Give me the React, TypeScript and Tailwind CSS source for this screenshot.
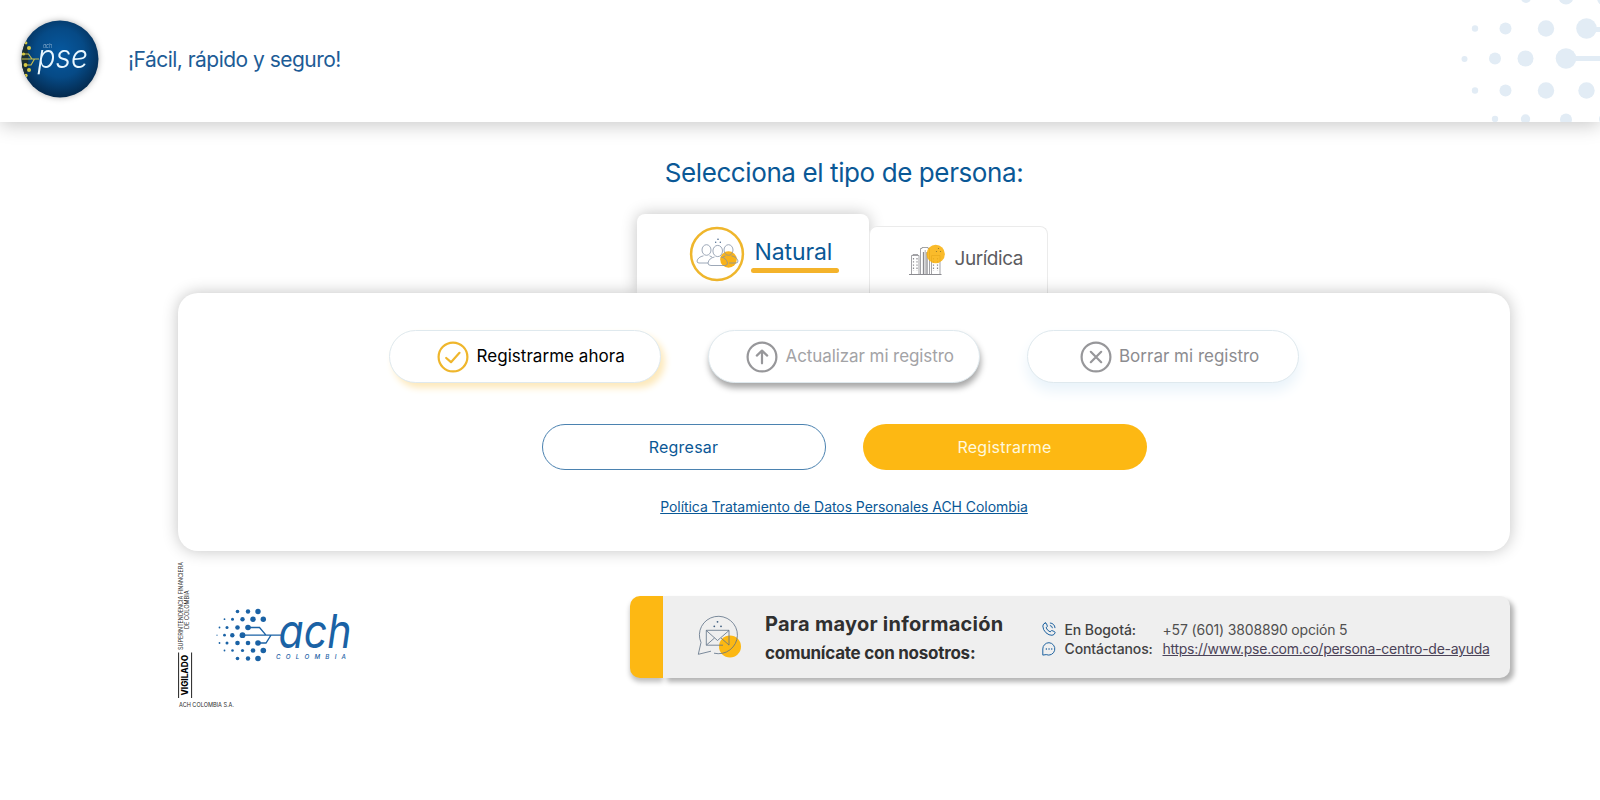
import React from 'react';

const actions = [
  {
    label: 'Registrarme ahora',
    icon: 'check',
    pill: 'pl-[47px] shadow-[4px_5px_7px_#fde9bb]',
    iconColor: 'text-[#efb62c]',
    text: 'text-black tracking-[0.04px]',
  },
  {
    label: 'Actualizar mi registro',
    icon: 'up',
    pill: 'pl-[37px] shadow-[1px_5px_6px_#a8a8a8]',
    iconColor: 'text-[#97979a]',
    text: 'text-[#a3a3a6] tracking-[-0.08px]',
  },
  {
    label: 'Borrar mi registro',
    icon: 'close',
    pill: 'pl-[51.5px] shadow-[0_8px_14px_#e9f3fa]',
    iconColor: 'text-[#97979a]',
    text: 'text-[#8c8c90] tracking-[0px]',
  },
];

const headerDots = [
  [86, -2, 5], [126, -3, 7.5], [165, -2, 8],
  [35, 28.5, 3.2], [65.5, 28.5, 6], [106, 28.5, 8.2], [146.5, 28.5, 10.3],
  [24.5, 59, 3], [55, 58.5, 6], [85.5, 58.5, 8], [126, 58.5, 10.3],
  [35, 90.5, 3.2], [65.5, 90.5, 6], [106, 90.5, 8.2], [146.5, 90.5, 8.2],
  [55, 119, 3.2], [85.5, 119, 4.7], [126, 119.5, 6], [165, 119, 6],
];

const achDots = [
  [77.5, 71.5, 1.8], [88, 71.5, 2.2], [98, 71.5, 2.7],
  [64.5, 79.2, 0.9], [72.5, 79.2, 1.5], [82.5, 79.2, 2.2], [93, 79.2, 2.7], [103.3, 79.2, 2.7],
  [59.5, 87.5, 0.9], [67, 87.5, 1.5], [77.5, 87.5, 2.3], [88, 87.5, 2.8],
  [57, 95.2, 0.6], [64.5, 95.2, 1.4], [72.3, 95.2, 2.2], [82.5, 95.2, 2.9],
  [59.5, 103, 0.9], [67, 103, 1.5], [77.5, 103, 2.3], [88, 103, 2.3], [98, 103, 2.8],
  [64.5, 110.5, 0.9], [72.5, 110.5, 1.3], [82.5, 110.5, 1.6], [93, 110.5, 2.3], [103.3, 110.5, 2.8],
  [77.5, 118.5, 1.8], [88, 118.5, 2.2], [98, 118.5, 2.8],
];

const PseLogo = () => (
  <svg className="w-[80px] h-[80px] overflow-visible drop-shadow-[0_0_3px_rgba(0,0,0,0.3)]" viewBox="20 18.5 80 80">
    <defs>
      <radialGradient id="pseBlue" cx="0.5" cy="0.42" r="0.58">
        <stop offset="0" stopColor="#0659a0" />
        <stop offset="0.55" stopColor="#064a86" />
        <stop offset="1" stopColor="#04294d" />
      </radialGradient>
      <clipPath id="pseClip">
        <circle cx="60" cy="58.5" r="38.5" />
      </clipPath>
    </defs>
    <circle cx="60" cy="58.5" r="38.5" fill="url(#pseBlue)" />
    <g clipPath="url(#pseClip)">
      <path d="M20 41H25Q29 49 28 58Q29 69 25 78H20Z" fill="#1c2f31" />
      <g fill="none" stroke="#c6bd4e" strokeWidth="1.2">
        <path d="M21 58.5H39M22 53.5H28.5L32 58.5M25.5 64.5H31L34.5 58.5" />
      </g>
      <g fill="#d6c944">
        <circle cx="29" cy="47.5" r="2" />
        <circle cx="26" cy="42.5" r="1.4" />
        <circle cx="25.5" cy="64.5" r="1.9" />
        <circle cx="29" cy="69.5" r="2" />
        <circle cx="26" cy="75" r="1.7" />
        <circle cx="23.5" cy="53.5" r="1.6" />
      </g>
    </g>
    <text x="43" y="47.5" fontSize="6.5" textLength="9" lengthAdjust="spacingAndGlyphs" fill="#9fbdd8" fontStyle="italic" fontWeight="300" fontFamily="Inter, sans-serif">ach</text>
    <text x="37.5" y="67.5" fontSize="32" textLength="50.5" lengthAdjust="spacingAndGlyphs" fill="#eaf8ff" fontStyle="italic" fontWeight="300" fontFamily="Inter, sans-serif">pse</text>
  </svg>
);

const HeaderPattern = () => (
  <svg className="w-[160px] h-[122px]" viewBox="0 0 160 122" fill="#e2ecf5">
    {headerDots.map(([cx, cy, r], i) => (
      <circle key={i} cx={cx} cy={cy} r={r} />
    ))}
    <rect x="130" y="56" width="30" height="5" />
    <rect x="150" y="27" width="10" height="5" />
  </svg>
);

const PeopleIcon = () => (
  <svg className="w-[56px] h-[56px]" viewBox="689 225.5 56 56" fill="none">
    <circle cx="717" cy="253.5" r="25.9" fill="#fff" stroke="#efb62c" strokeWidth="2.5" />
    <circle cx="728.5" cy="259" r="8.3" fill="#f9b31a" />
    <g stroke="#8492a6" strokeWidth="0.8">
      <ellipse cx="706.5" cy="249.5" rx="4.5" ry="5.3" />
      <ellipse cx="728.5" cy="249.5" rx="4.5" ry="5.3" />
      <path d="M708 262.5H699Q697 262.5 697 260.5Q698 256.5 703.5 255.3M709.5 255.3L712 256.5M731.5 255.3Q737 256.5 738 260.5Q738 262.5 736 262.5H729M725.5 255.3L723 256.5" />
      <ellipse cx="717.7" cy="250.5" rx="4.8" ry="5.6" fill="#fff" />
      <path d="M714.5 256.5Q709 257.5 708 262.5Q708 265 711 265H725Q727.5 265 727.5 262.5Q726.5 257.5 721 256.5" />
    </g>
    <g fill="#46658a">
      <circle cx="718" cy="238.7" r="0.8" />
      <circle cx="715.7" cy="241.8" r="0.7" />
      <circle cx="720.3" cy="241.8" r="0.7" />
    </g>
  </svg>
);

const BuildingIcon = () => (
  <svg className="w-[37px] h-[32px]" viewBox="909 244 37 32" fill="none">
    <g stroke="#8b8b90" strokeWidth="0.8">
      <path d="M911.5 274V255.5H919V274M913 255.5V254.5H918M920.5 274V248.5H922V247.5H928V248.5H929.5V274M931.5 274V255.5H940V274" />
      <path d="M909 274.5H941.5" strokeWidth="1.2" />
      <path d="M923.5 252V274M927 252V274" strokeWidth="1.3" />
      <path d="M925.2 250V274" strokeWidth="0.7" />
      <path d="M913.5 258V271M917 258V271M933.5 258V271M937.5 258V271" strokeWidth="1.2" strokeDasharray="1.4 1.8" />
    </g>
    <circle cx="935.7" cy="254" r="9.2" fill="#f9b10c" fillOpacity="0.87" />
    <g fill="#8a742e">
      <circle cx="938.5" cy="248.5" r="0.6" />
      <circle cx="936.5" cy="251.5" r="0.6" />
      <circle cx="940.5" cy="251.5" r="0.6" />
    </g>
  </svg>
);

const getActionIcon = (icon: string) => {
  switch (icon) {
    case 'check':
      return <path d="M9.2 17L14 21.2L22.5 11.8" />;
    case 'up':
      return <path d="M16 22.3V9.8M10.8 14.6L16 9.6L21.2 14.6" />;
    case 'close':
      return <path d="M10.8 10.8L21.2 21.2M21.2 10.8L10.8 21.2" />;
    default:
      return null;
  }
};

const MailIcon = () => (
  <svg className="w-[46px] h-[46px]" viewBox="697 614 46 46" fill="none">
    <circle cx="730" cy="646.5" r="11" fill="#fcb813" />
    <g stroke="#5d7085" strokeWidth="0.8">
      <path d="M711 651.2L698.3 654.3L701 642.5A19 18.7 0 1 1 714 653.2" />
      <path d="M723 645.2H706.3V630.3H729V645.2M706.3 630.5L717.5 640.5L729 630.5M706.5 645L714.5 638M729 645L721 638" />
    </g>
    <g fill="#3f5e80">
      <circle cx="717.5" cy="621.8" r="0.9" />
      <circle cx="714.3" cy="626.3" r="0.9" />
      <circle cx="721" cy="626.3" r="0.9" />
    </g>
  </svg>
);

const PhoneIcon = () => (
  <svg className="w-[14px] h-[14px]" viewBox="0 0 14 14" fill="none" stroke="#1f63a0" strokeWidth="1" strokeLinecap="round" strokeLinejoin="round">
    <path d="M3.2 1Q1 1.6 0.8 4Q1 8 4 10.8Q7 13.4 10 13.3Q12.4 13 13.1 10.8Q13.2 9.8 12.3 9.5L10 8.6Q9.3 8.5 8.8 9L8.2 9.9Q5.2 8.6 4.1 5.7L5 5Q5.5 4.6 5.3 4L4.5 1.6Q4.1 0.8 3.2 1Z" />
    <path d="M8.3 1Q12.5 1.4 13 5.7M8.3 3.6Q10.2 3.9 10.4 5.8" />
  </svg>
);

const ChatIcon = () => (
  <svg className="w-[14px] h-[14px]" viewBox="0 0 14 14" fill="none" stroke="#1f63a0" strokeWidth="1" strokeLinejoin="round">
    <path d="M7 0.7A6.2 6.2 0 1 1 4.2 12.6L0.8 13.1V7A6.2 6.2 0 0 1 7 0.7Z" />
    <path d="M3.8 7H4.9M6.5 7H7.6M9.2 7H10.3" strokeWidth="1.3" />
  </svg>
);

const AchLogo = () => (
  <svg className="w-[136px] h-[56px] overflow-visible" viewBox="55 67 136 56">
    <g fill="#1a62a5">
      {achDots.map(([cx, cy, r], i) => (
        <circle key={i} cx={cx} cy={cy} r={r} />
      ))}
    </g>
    <path d="M88 87.5H99.5L106 95.2M82.5 95.2H121M98 103H106L111 95.2" fill="none" stroke="#1a62a5" strokeWidth="1.3" />
    <text x="118.5" y="107.8" fontSize="47" textLength="73" lengthAdjust="spacingAndGlyphs" fill="#1a62a5" fontStyle="italic" fontWeight="400" fontFamily="Inter, sans-serif">ach</text>
    <text x="116" y="119" fontSize="6.2" textLength="70" fill="#1a62a5" fontStyle="italic" fontWeight="500" fontFamily="Inter, sans-serif">COLOMBIA</text>
  </svg>
);

const Supervised = () => (
  <svg className="w-[60px] h-[150px] overflow-visible" viewBox="178 560 60 150" fontFamily="Inter, sans-serif" fill="#2b2b2b">
    <text transform="translate(183.2 650) rotate(-90)" fontSize="6" textLength="88" lengthAdjust="spacingAndGlyphs">SUPERINTENDENCIA FINANCIERA</text>
    <text transform="translate(189.4 629) rotate(-90)" fontSize="6" textLength="38.5" lengthAdjust="spacingAndGlyphs">DE COLOMBIA</text>
    <text transform="translate(188 695.5) rotate(-90)" fontSize="8.3" fontWeight="800" textLength="40.5" lengthAdjust="spacingAndGlyphs" fill="#000">VIGILADO</text>
    <path d="M178.6 652.5V698M191.6 652.5V698" stroke="#222" strokeWidth="1" />
    <text x="179" y="706.5" fontSize="6" textLength="55" lengthAdjust="spacingAndGlyphs">ACH COLOMBIA S.A.</text>
  </svg>
);

const App: React.FC = () => {
  return (
    <div className="h-[800px] overflow-hidden bg-white font-[Inter,sans-serif] text-[#0a5896]">
      {/* Header */}
      <header className="relative z-10 flex h-[122px] items-start justify-between bg-white pl-[20px] shadow-[0_3px_18px_rgba(0,0,0,0.22)]">
        <div className="flex items-center pt-[18.5px]">
          <PseLogo />
          <span className="ml-[28px] mt-[2px] whitespace-nowrap text-[21px] tracking-[-0.52px] text-[#1d5c96]">¡Fácil, rápido y seguro!</span>
        </div>
        <HeaderPattern />
      </header>

      <main className="ml-[178px] w-[1332px]">
        <h1 className="flex h-[92px] items-start justify-center whitespace-nowrap pt-[31px] text-[26px] leading-[40px] tracking-[-0.4px]">
          Selecciona el tipo de persona:
        </h1>

        {/* Person type tabs */}
        <div className="ml-[459px] flex h-[79px] items-end">
          <button className="flex h-[79px] w-[232px] items-start rounded-t-lg bg-white pl-[52px] pt-[11.5px] shadow-[0_0_16px_rgba(0,0,0,0.24)]">
            <PeopleIcon />
            <span className="ml-[6px] mt-[11px] flex w-[88px] flex-col items-start">
              <span className="pl-[3.5px] text-[23px] leading-[30px] tracking-[-0.1px]">Natural</span>
              <span className="mt-[1.5px] h-[4.5px] w-[88px] rounded-full bg-[#f4b32b]" />
            </span>
          </button>
          <button className="flex h-[67px] w-[179px] items-start rounded-t-lg border border-b-0 border-[#ebebeb] bg-white pl-[39px] pt-[17px]">
            <BuildingIcon />
            <span className="ml-[8.5px] mt-[1px] text-[19px] leading-[28px] tracking-[-0.45px] text-[#5c5c5f]">Jurídica</span>
          </button>
        </div>

        {/* Options card */}
        <section className="relative flex h-[257.5px] flex-col items-center rounded-[20px] bg-white pt-[37px] shadow-[0_0_16px_rgba(0,0,0,0.24)]">
          <div className="flex gap-[47px]">
            {actions.map((action) => (
              <button
                key={action.label}
                className={`flex h-[53px] w-[272px] items-center whitespace-nowrap rounded-full border border-[#dfe9ee] bg-white ${action.pill}`}
              >
                <svg
                  className={`h-[32px] w-[32px] shrink-0 ${action.iconColor}`}
                  viewBox="0 0 32 32"
                  fill="none"
                  stroke="currentColor"
                  strokeWidth="2.2"
                  strokeLinecap="round"
                  strokeLinejoin="round"
                >
                  <circle cx="16" cy="16" r="14.4" />
                  {getActionIcon(action.icon)}
                </svg>
                <span className={`-mt-[2px] ml-[7.5px] text-[17px] leading-[24px] ${action.text}`}>{action.label}</span>
              </button>
            ))}
          </div>
          <div className="mt-[41px] flex gap-[37px] text-[16px]">
            <button className="h-[46px] w-[284px] rounded-full border border-[#4b82b0] bg-white tracking-[0.25px]">Regresar</button>
            <button className="h-[46px] w-[284px] rounded-full bg-[#fdb813] tracking-[0.25px] text-[#fff8dc]">Registrarme</button>
          </div>
          <a className="mt-[26px] whitespace-nowrap text-[14px] leading-[22px] tracking-[-0.06px] underline" href="#">
            Política Tratamiento de Datos Personales ACH Colombia
          </a>
        </section>

        {/* Footer */}
        <footer className="flex items-start pt-[9.5px]">
          <Supervised />
          <div className="-ml-[23px] mt-[47px]">
            <AchLogo />
          </div>
          <div className="ml-auto mt-[36px] flex h-[82px] w-[880px]">
            <div className="w-[33px] shrink-0 rounded-l-[10px] bg-[#fdb813] shadow-[0_4px_5px_rgba(0,0,0,0.25)]" />
            <div className="flex flex-1 items-start rounded-r-[10px] bg-[#efefef] pl-[34px] shadow-[4px_4px_5px_rgba(0,0,0,0.3)]">
              <div className="mt-[18px] shrink-0">
                <MailIcon />
              </div>
              <div className="ml-[22px] w-[277px] shrink-0 whitespace-nowrap pt-[14px] font-bold text-[#303030]">
                <p className="text-[20px] leading-[28px] tracking-[0.27px]">Para mayor información</p>
                <p className="mt-[3px] text-[17px] leading-[24px] tracking-[-0.25px]">comunícate con nosotros:</p>
              </div>
              <div className="grid grid-cols-[22.5px_98px_1fr] items-center whitespace-nowrap pt-[23.5px] text-[14px] leading-[19.5px] text-[#505050]">
                <PhoneIcon />
                <span className="font-medium tracking-[-0.1px] text-[#424242]">En Bogotá:</span>
                <span className="tracking-[-0.17px]">+57 (601) 3808890 opción 5</span>
                <ChatIcon />
                <span className="font-medium tracking-[-0.1px] text-[#424242]">Contáctanos:</span>
                <a className="tracking-[-0.27px] text-[#4b4358] underline" href="#">https://www.pse.com.co/persona-centro-de-ayuda</a>
              </div>
            </div>
          </div>
        </footer>
      </main>
    </div>
  );
};

export default App;
